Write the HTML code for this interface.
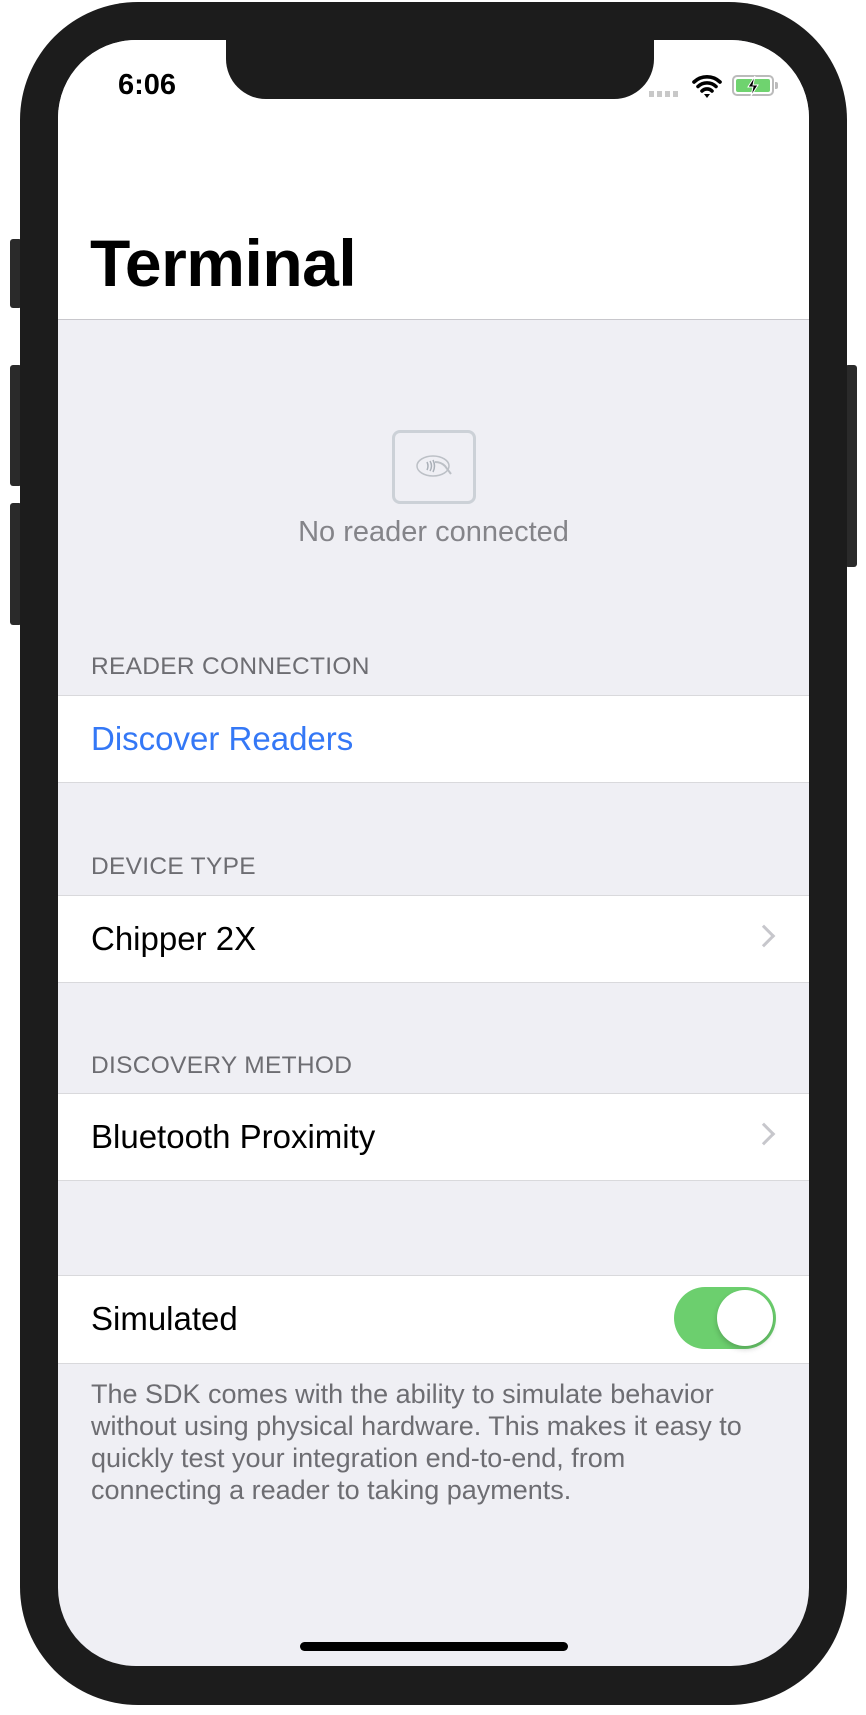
<!DOCTYPE html>
<html><head><meta charset="utf-8"><style>
*{margin:0;padding:0;box-sizing:border-box}
body{width:866px;height:1715px;background:#fff;position:relative;overflow:hidden;font-family:"Liberation Sans",sans-serif}
.frame{position:absolute;left:20px;top:2px;width:827px;height:1703px;background:#1c1c1c;border-radius:118px}
.btn{position:absolute;background:#2a2a2a;border-radius:3px}
.screen{position:absolute;left:58px;top:40px;width:751px;height:1626px;background:#efeff4;border-radius:78px;overflow:hidden}
.notch{position:absolute;left:168px;top:-2px;width:428px;height:61px;background:#1c1c1c;border-radius:0 0 40px 40px}
.top{position:absolute;left:0;top:0;width:751px;height:280px;background:#fff;border-bottom:1px solid #c8c7cc}
.abs{position:absolute}
.hdr{position:absolute;left:33px;font-size:24.5px;color:#6d6d72;letter-spacing:0.3px}
.row{position:absolute;left:0;width:751px;height:88px;background:#fff;border-top:1px solid #d9d9dc;border-bottom:1px solid #d9d9dc;font-size:33px;line-height:86px;padding-left:33px;color:#000}
.chev{position:absolute;right:37px;top:32px;width:16px;height:16px;border-right:3px solid #c7c7cc;border-top:3px solid #c7c7cc;transform:rotate(45deg)}
</style></head><body>
<div class="btn" style="left:10px;top:239px;width:12px;height:69px"></div>
<div class="btn" style="left:10px;top:365px;width:12px;height:121px"></div>
<div class="btn" style="left:10px;top:503px;width:12px;height:122px"></div>
<div class="btn" style="left:845px;top:365px;width:12px;height:202px"></div>
<div class="frame"></div>
<div class="screen">
 <div class="top">
  <div class="abs" style="left:60px;top:29px;font-size:29px;font-weight:bold;color:#000">6:06</div>
  <div class="abs" style="left:591px;top:51px;width:30px;height:6px;background:repeating-linear-gradient(90deg,#c8c8c8 0 5px,transparent 5px 8px)"></div>
  <svg class="abs" style="left:634px;top:34px" width="30" height="24" viewBox="0 0 30 24"><path d="M2 8a19 19 0 0 1 26 0M6 12.5a13 13 0 0 1 18 0M10 17a7 7 0 0 1 10 0" stroke="#000" stroke-width="3.6" fill="none" stroke-linecap="round"/><path d="M12 20l3 4 3-4z" fill="#000"/></svg>
  <div class="abs" style="left:674px;top:35px;width:42px;height:21px;border:2px solid #bbb;border-radius:5px;padding:2px"><div style="width:100%;height:100%;background:#6fd36f;border-radius:2px"></div></div>
  <div class="abs" style="left:717px;top:42px;width:3px;height:7px;background:#bbb;border-radius:0 2px 2px 0"></div>
  <svg class="abs" style="left:686px;top:35px" width="18" height="22" viewBox="0 0 18 22"><path d="M11 1L4 12h5l-2 9 7-11H9z" fill="#000" stroke="#fff" stroke-width="1"/></svg>
  <div class="abs" style="left:32px;top:185px;font-size:66px;font-weight:bold;color:#000;letter-spacing:-0.5px">Terminal</div>
 </div>
 <div class="notch"></div>
 <div class="abs" style="left:334px;top:390px;width:84px;height:74px;border:3px solid #ccd1d7;border-radius:8px"></div>
 <svg class="abs" style="left:355px;top:410px" width="46" height="30" viewBox="0 0 46 30"><ellipse cx="20" cy="16" rx="16" ry="10" fill="none" stroke="#bcc0c6" stroke-width="1.5"/><path d="M14 12q2 4 0 8M17 11q3 5 0 10M20 10q3 6 0 12" stroke="#aab0b8" stroke-width="1.5" fill="none"/><path d="M22 12q6 0 10 4l6 8" stroke="#bcc0c6" stroke-width="2" fill="none"/></svg>
 <div class="abs" style="left:0;width:751px;text-align:center;top:476px;font-size:29px;color:#848489">No reader connected</div>
 <div class="hdr" style="top:613px">READER CONNECTION</div>
 <div class="row" style="top:655px;color:#3478f6">Discover Readers</div>
 <div class="hdr" style="top:813px">DEVICE TYPE</div>
 <div class="row" style="top:855px">Chipper 2X<div class="chev"></div></div>
 <div class="hdr" style="top:1012px">DISCOVERY METHOD</div>
 <div class="row" style="top:1053px">Bluetooth Proximity<div class="chev"></div></div>
 <div class="row" style="top:1235px;height:89px">Simulated
  <div class="abs" style="left:616px;top:11px;width:102px;height:62px;background:#6ccf6e;border-radius:31px"><div style="position:absolute;right:3px;top:3px;width:56px;height:56px;background:#fff;border-radius:50%;box-shadow:0 3px 6px rgba(0,0,0,.2)"></div></div>
 </div>
 <div class="abs" style="left:33px;top:1338px;width:660px;font-size:27px;line-height:32px;color:#6d6d72">The SDK comes with the ability to simulate behavior without using physical hardware. This makes it easy to quickly test your integration end-to-end, from connecting a reader to taking payments.</div>
 <div class="abs" style="left:242px;top:1602px;width:268px;height:9px;background:#000;border-radius:5px"></div>
</div>
</body></html>
